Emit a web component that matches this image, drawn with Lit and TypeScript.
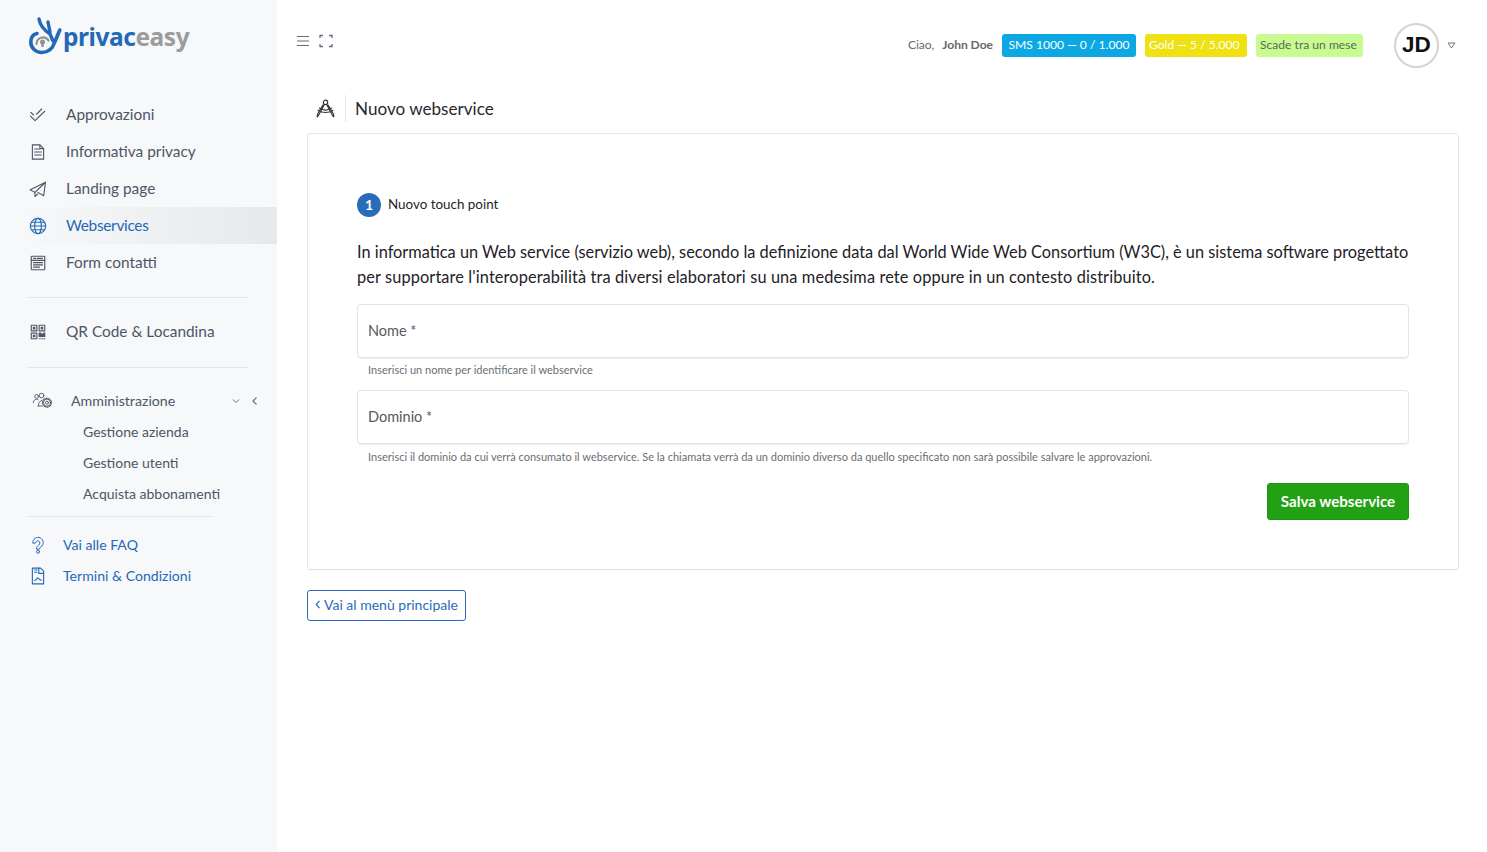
import { LitElement, html, css, svg } from "lit";
import { customElement } from "lit/decorators.js";

const ic = (body: unknown, vb = "0 0 24 24") => html`<svg class="ic" viewBox=${vb} fill="none" stroke="currentColor" stroke-width="1.500" stroke-linecap="round" stroke-linejoin="round">${body}</svg>`;

const icons = {
  check: svg`<path d="M2 13.500l6 6L21 7"/><path d="M2.500 8.500l3.500 3.500M10 11l7-7"/>`,
  doc: svg`<path d="M4.500 2.500h10l5 5v14h-15z"/><path d="M7.500 8h6M7.500 12h9M7.500 16h9"/><path d="M14.500 2.500v5h5"/>`,
  plane: svg`<path d="M22 3L1.500 13l6.500 3.500L22 3z"/><path d="M8 16.500V22l4-3.500"/><path d="M22 3l-2.500 18-7.500-4.500"/>`,
  globe: svg`<circle cx="12" cy="12" r="10.200"/><ellipse cx="12" cy="12" rx="4.500" ry="10.200"/><path d="M1.800 12h20.400M3.500 7h17M3.500 17h17"/>`,
  form: svg`<rect x="3" y="3" width="18" height="18" rx="1"/><path d="M3 8.500h18M6 5.800h3M11 5.800h7M6 11.500h12M6 14.500h12M6 17.500h8"/>`,
  qr: svg`<rect x="3" y="3" width="7.500" height="7.500"/><rect x="13.500" y="3" width="7.500" height="7.500"/><rect x="3" y="13.500" width="7.500" height="7.500"/><rect x="5.800" y="5.800" width="2" height="2" fill="currentColor"/><rect x="16.300" y="5.800" width="2" height="2" fill="currentColor"/><rect x="5.800" y="16.300" width="2" height="2" fill="currentColor"/><path d="M13.500 18v-4.500h2l2 2 2-2H21V18h-7.500z" fill="currentColor"/><path d="M14 21h1M17 21h1M20 21h1"/>`,
  admin: svg`<g stroke-width="1.100"><circle cx="5.500" cy="6.500" r="2.300"/><path d="M1.500 14c0-2.300 1.700-4 4-4 .8 0 1.500.2 2 .5"/><circle cx="11.500" cy="5.500" r="2.800"/><path d="M7.500 18c0-3 1.500-6 4.500-7"/><path d="M7.500 18h5"/><circle cx="18" cy="14" r="1.800"/><circle cx="18" cy="14" r="4.300"/><circle cx="18" cy="14" r="5.300" stroke-dasharray="1.800 1.500" stroke-width="1.300"/></g>`,
  help: svg`<g stroke-width="1.300"><path d="M5 9a7 7 0 1 1 11 5.500c-1.500 1-2 2-2 3h-4c0-3 1.500-4.500 3-5.500a3 3 0 1 0-4.500-3z"/><circle cx="12" cy="21" r="2"/></g>`,
  pdf: svg`<path d="M4.500 1.500h11l4 4v17h-15z"/><path d="M13 1.500v7h6.500M7.500 4h3M7.500 7h3"/><path d="M7.500 18c2.500 0 3-3.500 4-3.500s1.500 3 5 3"/>`,
  compass: svg`<circle cx="12" cy="5" r="2.500"/><path d="M10.800 7.200L4 20l-1.500 1.500.3-3L9 8M13.200 7.200L20 20l1.500 1.500-.3-3L15 8"/><path d="M3.500 14c5 3.500 12 3.500 17 0"/><path d="M5 11.500c4.500 3 9.500 3 14 0"/>`,
};

@customElement("side-nav")
class SideNav extends LitElement {
  static styles = css`
    :host { display: flex; flex-direction: column; width: 277px; height: 852px; flex: none; background: #f7f8fa; color: #4d5666; font-family: Lato, sans-serif; }
    .ic { width: 18px; height: 18px; flex: none; }
    .logo { display: flex; align-items: flex-start; height: 97px; box-sizing: border-box; padding: 17px 0 0 29px; }
    .logo-wrap { display: flex; align-items: center; height: 38px; }
    .logo svg { width: 35px; height: 38px; flex: none; margin-right: -1px; }
    .wm { font: 700 24.500px/1 "Noto Sans", sans-serif; letter-spacing: -0.450px; color: #2468b8; padding-top: 3px; }
    .wm b { color: #9a9c9e; font-weight: 700; }
    .row { display: flex; align-items: center; box-sizing: border-box; height: 36.800px; padding: 0 0 0 29px; gap: 19px; font-size: 15.400px; }
    .row span { white-space: nowrap; padding-bottom: 2px; }
    .active { color: #2468b8; background: linear-gradient(90deg, #f7f8fa 8%, #e6e8ea 100%); }
    .active span { letter-spacing: -0.300px; }
    hr { border: 0; height: 1px; background: #e4e6e9; margin: 0 28px 0 27px; }
    .h1 { margin-top: 16px; }
    .qr { margin: 15.500px 0 16.500px; }
    .admin { display: flex; align-items: center; box-sizing: border-box; height: 31px; margin-top: 18px; padding: 0 0 0 32px; font-size: 14.200px; position: relative; }
    .admin span { padding-bottom: 2px; }
    .admin .ic { margin-right: 19px; width: 20px; height: 20px; }
    .admin .cv { position: absolute; top: 11px; width: 8px; height: 8px; color: #666f7d; }
    .sub { display: flex; align-items: center; box-sizing: border-box; height: 31px; padding: 0 0 2px 83px; font-size: 14px; white-space: nowrap; }
    .h2 { margin: 6px 65px 0 28px; }
    .link { display: flex; align-items: center; height: 31px; padding-left: 29px; gap: 16px; font-size: 14.100px; color: #2468b8; white-space: nowrap; }
    .link span { padding-bottom: 2px; }
    .link .ic { width: 18px; height: 18px; }
    .links { margin-top: 13px; }
  `;
  render() {
    const items: [keyof typeof icons, string, boolean][] = [
      ["check", "Approvazioni", false],
      ["doc", "Informativa privacy", false],
      ["plane", "Landing page", false],
      ["globe", "Webservices", true],
      ["form", "Form contatti", false],
    ];
    return html`
      <div class="logo"><div class="logo-wrap">
        <svg viewBox="0 0 35 38" fill="none" stroke="#2468b8" stroke-linecap="round">
          <path d="M8 16.500C3.500 17.500 1.800 21 1.800 25c0 6 5 10.500 11 10.500 7 0 11-4.500 13-10.500l5-12" stroke-width="3.600"/>
          <path d="M10 2c1 6 5 11 11 15l3 7" stroke-width="3.400"/>
          <path d="M19 5l2 10" stroke-width="3.400"/>
          <path d="M7.500 27a6.500 6.500 0 0 1 12-3.500" stroke="#8f9296" stroke-width="2.200"/>
          <circle cx="13.500" cy="25" r="2.500" fill="#8f9296" stroke="none"/>
          <rect x="12.300" y="25.500" width="2.400" height="4.500" fill="#8f9296" stroke="none"/>
        </svg>
        <div class="wm">privac<b>easy</b></div>
      </div></div>
      ${items.map(([i, t, a]) => html`<div class="row ${a ? "active" : ""}">${ic(icons[i])}<span>${t}</span></div>`)}
      <hr class="h1" />
      <div class="row qr">${ic(icons.qr)}<span>QR Code &amp; Locandina</span></div>
      <hr />
      <div class="admin">${ic(icons.admin)}<span>Amministrazione</span>
        <svg class="cv" style="left:232px" viewBox="0 0 8 8" fill="none" stroke="currentColor"><path d="M1 2.500l3 3 3-3"/></svg>
        <svg class="cv" style="left:251px" viewBox="0 0 8 8" fill="none" stroke="currentColor" stroke-width="1.200"><path d="M5.500 .5L2 4l3.500 3.500"/></svg>
      </div>
      <div class="sub">Gestione azienda</div>
      <div class="sub">Gestione utenti</div>
      <div class="sub">Acquista abbonamenti</div>
      <hr class="h2" />
      <div class="links">
        <div class="link">${ic(icons.help)}<span>Vai alle FAQ</span></div>
        <div class="link">${ic(icons.pdf)}<span>Termini &amp; Condizioni</span></div>
      </div>
    `;
  }
}

@customElement("app-root")
class AppRoot extends LitElement {
  static styles = css`
    :host { display: flex; width: 1487px; height: 852px; overflow: hidden; background: #fff; font-family: Lato, sans-serif; color: #1f2328; }
    .main { flex: 1; min-width: 0; padding-left: 30px; padding-right: 28px; display: flex; flex-direction: column; }
    .top { display: flex; align-items: center; height: 90px; position: relative; }
    .tools { display: flex; align-items: center; gap: 9px; margin: -8px 0 0 -11px; color: #626c7a; }
    .tools svg { width: 14px; height: 14px; }
    .right { margin-left: auto; display: flex; align-items: center; font-size: 12.100px; color: #66696d; }
    .hello b { margin-left: 5px; }
    .tag { display: flex; align-items: center; height: 23px; box-sizing: border-box; border-radius: 3px; margin-left: 9px; white-space: nowrap; }
    .hello { white-space: nowrap; padding-bottom: 2px; letter-spacing: -0.050px; }
    .sms { background: #0ca8e3; color: #fff; width: 134px; justify-content: center; padding: 0 0 2px; }
    .gold { background: #f0e112; color: #fff; width: 102px; padding: 0 0 2px 4px; }
    .exp { background: #c8fb92; color: #5b6a55; width: 107px; padding: 0 0 2px 4px; }
    .av { width: 41px; height: 41px; border: 2px solid #d3d3d6; border-radius: 50%; margin-left: 31px; display: flex; align-items: center; justify-content: center; font: 700 22.500px "Liberation Sans", sans-serif; color: #111; flex: none; }
    .caret { width: 9px; height: 7px; margin: 0 3px 0 8px; flex: none; color: #6d7785; }
    .title { display: flex; align-items: center; height: 27px; margin: 5px 0 11px 8px; }
    .title .ic { width: 21px; height: 21px; color: #33373c; flex: none; stroke-width: 1.300; }
    .title .sep { width: 1px; height: 27px; background: #e3e5e8; margin: 0 9px 0 9px; }
    .title h1 { margin: 0; font-weight: 400; font-size: 17.100px; color: #26292d; }
    .card { box-sizing: border-box; height: 437px; border: 1px solid #e4e5e7; border-radius: 3px; padding: 59px 49px 0; box-shadow: 0 1px 1px rgba(0, 0, 0, 0.03); }
    .step { display: flex; align-items: center; gap: 7px; font-size: 13.400px; height: 24px; }
    .step span { padding-bottom: 2px; }
    .num { width: 24px; height: 24px; border-radius: 50%; background: #2a6cb7; color: #fff; display: flex; align-items: center; justify-content: center; font-size: 14px; font-weight: 700; padding-bottom: 2px; box-sizing: border-box; }
    p { font-size: 16.330px; line-height: 25px; margin: 22px 0 15px; color: #1e2126; white-space: nowrap; }
    .l2 { letter-spacing: 0.115px; }
    .input { box-sizing: border-box; height: 54px; border: 1px solid #e2e3e6; border-radius: 4px; display: flex; align-items: center; padding: 0 0 2px 10px; font-size: 14.500px; color: #565a5f; box-shadow: 0 1px 0 #eeeff1; }
    .help { font-size: 11.030px; color: #6a6e73; padding-left: 11px; height: 32px; display: flex; align-items: center; white-space: nowrap; box-sizing: border-box; padding-bottom: 9px; }
    .help.low { padding-bottom: 7px; }
    .actions { display: flex; justify-content: flex-end; margin-top: 7px; }
    .save { box-sizing: border-box; width: 142px; height: 37px; background: #22a114; color: #fff; border: 1px solid #1f9512; border-radius: 3px; font: 700 15.100px Lato, sans-serif; padding: 0 0 2px; }
    .back { align-self: flex-start; box-sizing: border-box; margin-top: 20px; height: 31px; width: 159px; display: flex; align-items: center; justify-content: center; gap: 3px; border: 1px solid #2a6cb7; border-radius: 3px; color: #2a6cb7; font-size: 14px; white-space: nowrap; padding-bottom: 2px; }
    .back svg { width: 6px; height: 9px; }
  `;
  render() {
    return html`
      <side-nav></side-nav>
      <div class="main">
        <div class="top">
          <div class="tools">
            <svg viewBox="0 0 14 14" fill="none" stroke="currentColor"><path d="M1 2.500h12M1 7h12M1 11.500h12"/></svg>
            <svg viewBox="0 0 14 14" fill="none" stroke="currentColor" stroke-width="1.300"><path d="M1 4V1.500h3M10 1.500h3V4M13 10v2.500h-3M4 12.500H1V10"/></svg>
          </div>
          <div class="right">
            <div class="hello">Ciao, <b>John Doe</b></div>
            <div class="tag sms">SMS 1000 — 0 / 1.000</div>
            <div class="tag gold">Gold — 5 / 5.000</div>
            <div class="tag exp">Scade tra un mese</div>
            <div class="av">JD</div>
            <svg class="caret" viewBox="0 0 9 7" fill="none" stroke="currentColor"><path d="M1 1h7L4.500 6z"/></svg>
          </div>
        </div>
        <div class="title">${ic(icons.compass)}<div class="sep"></div><h1>Nuovo webservice</h1></div>
        <div class="card">
          <div class="step"><div class="num">1</div><span>Nuovo touch point</span></div>
          <p>In informatica un Web service (servizio web), secondo la definizione data dal World Wide Web Consortium (W3C), è un sistema software progettato<br /><span class="l2">per supportare l'interoperabilità tra diversi elaboratori su una medesima rete oppure in un contesto distribuito.</span></p>
          <div class="input">Nome *</div>
          <div class="help">Inserisci un nome per identificare il webservice</div>
          <div class="input">Dominio *</div>
          <div class="help low">Inserisci il dominio da cui verrà consumato il webservice. Se la chiamata verrà da un dominio diverso da quello specificato non sarà possibile salvare le approvazioni.</div>
          <div class="actions"><button class="save">Salva webservice</button></div>
        </div>
        <div class="back"><svg viewBox="0 0 6 9" fill="none" stroke="currentColor" stroke-width="1.200"><path d="M4.500 .8L1.200 4.500l3.300 3.700"/></svg>Vai al menù principale</div>
      </div>
    `;
  }
}
